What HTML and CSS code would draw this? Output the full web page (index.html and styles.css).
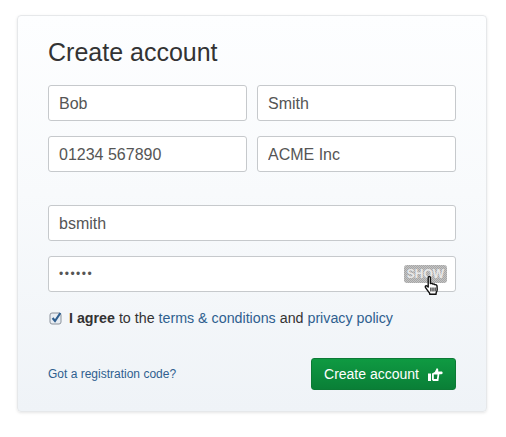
FILE: index.html
```html
<!DOCTYPE html>
<html lang="en">
<head>
<meta charset="utf-8">
<title>Create account</title>
<link rel="stylesheet" href="styles.css">
</head>
<body>
<form class="card">
  <h1 class="title">Create account</h1>
  <div class="grid">
    <input class="field" type="text" value="Bob">
    <input class="field" type="text" value="Smith">
    <input class="field" type="text" value="01234 567890">
    <input class="field" type="text" value="ACME Inc">
  </div>
  <div class="stack">
    <input class="field" type="text" value="bsmith">
    <div class="password">
      <input class="field" type="password" value="secret">
      <span class="show">SHOW</span>
      <svg class="cursor" viewBox="0 0 16 20" width="16" height="20" aria-hidden="true">
        <path d="M4.200 1.600c0-1.300 2.200-1.300 2.200 0v6l.5-.1c.9-.2 1.700.1 2 .6.9-.3 1.700 0 2 .6 1-.2 2 .3 2.100 1.200l.2 3.600c0 1.400-.5 2.400-1 3.200l-.2 1.600H5.800l-.3-1.300c-1.200-1.400-2.400-3-3.600-4.800-.7-1-.8-1.900-.2-2.300.7-.5 1.500 0 2.500 1.200z" fill="#fff" stroke="#111" stroke-width="1.400" stroke-linejoin="round"/>
        <path d="M6.900 11.500v4M9 11.500v4M11.100 11.500v4" stroke="#111" stroke-width="1.100"/>
      </svg>
    </div>
  </div>
  <label class="agree">
    <svg class="check" viewBox="0 0 14 14" width="14" height="14" aria-hidden="true">
      <rect x="1" y="2" width="11" height="11" rx="2" fill="#e8edf3" stroke="#8b929b"/>
      <path d="M3.600 7l2.400 3 5.400-8" fill="none" stroke="#2f5f8f" stroke-width="2.200"/>
    </svg>
    <span><b>I agree</b> to the <a href="#">terms &amp; conditions</a> and <a href="#">privacy policy</a></span>
  </label>
  <div class="footer">
    <a class="code" href="#">Got a registration code?</a>
    <button class="submit" type="button">
      Create account
      <svg viewBox="0 0 15 13" width="15" height="13" aria-hidden="true">
        <path d="M0 5.500h3v7.500H0z" fill="#fff"/>
        <path d="M4 5.500 6.800 4 8.600.4c1.200-.3 2 .9 1.600 3h3.200c1.700 0 1.700 2.800 0 2.800h-2.100l-.9 6.800H5l-1-1.200z" fill="#fff"/>
        <path d="M5.800 6.500h3.700l-.6 4.400H5.800z" fill="#0b8439"/>
      </svg>
    </button>
  </div>
</form>
</body>
</html>
```
FILE: styles.css
```css
* { box-sizing: border-box; }
html, body { margin: 0; background: #fff; }
body {
  width: 506px;
  height: 437px;
  padding: 15px 19px 0 17px;
  font-family: "Liberation Sans", Arial, sans-serif;
  color: #333;
}
.card {
  height: 397px;
  padding: 20px 30px 0;
  border: 1px solid #e6e8ea;
  border-radius: 4px;
  background: linear-gradient(180deg, #fdfeff 0%, #f8fafc 45%, #eff3f7 100%);
  box-shadow: 0 1px 3px rgba(0, 0, 0, .1);
}
.title {
  margin: 0 0 17px;
  font-size: 25px;
  line-height: 32px;
  font-weight: 400;
  color: #333;
}
.grid {
  display: grid;
  grid-template-columns: 199px 199px;
  column-gap: 10px;
  row-gap: 15px;
}
.stack {
  display: flex;
  flex-direction: column;
  gap: 15px;
  margin-top: 33px;
}
.field {
  display: block;
  width: 100%;
  height: 36px;
  padding: 2px 10px 0;
  border: 1px solid #c6c9cc;
  border-radius: 3px;
  background: #fff;
  font: 16px "Liberation Sans", Arial, sans-serif;
  color: #555;
  outline: none;
}
.field[type="password"] { padding-top: 0; font-size: 12px; letter-spacing: 1.500px; }
.password { position: relative; }
.show {
  position: absolute;
  top: 9px;
  right: 9px;
  width: 43px;
  height: 18px;
  border-radius: 3px;
  background: repeating-conic-gradient(#a6a6a6 0 25%, #c4c4c4 0 50%) 0 0 / 2px 2px;
  font-size: 12px;
  font-weight: 700;
  line-height: 18px;
  text-align: center;
  color: #e8e8e8;
}
.cursor { position: absolute; top: 20px; right: 16px; }
.agree {
  display: flex;
  align-items: center;
  gap: 6px;
  margin: 16px 0 0 1px;
  height: 20px;
  font-size: 14.250px;
  color: #333;
}
.check { flex: none; }
a { color: #2f5f8f; text-decoration: none; }
.footer {
  display: flex;
  align-items: center;
  justify-content: space-between;
  margin-top: 30px;
}
.code { font-size: 12px; }
.submit {
  display: flex;
  align-items: center;
  justify-content: center;
  gap: 9px;
  width: 145px;
  height: 32px;
  padding: 0;
  border: 1px solid #0c7a35;
  border-radius: 3px;
  background: linear-gradient(180deg, #0f9a42 0%, #0a7f37 100%);
  font: 14px "Liberation Sans", Arial, sans-serif;
  color: #fff;
}
```
